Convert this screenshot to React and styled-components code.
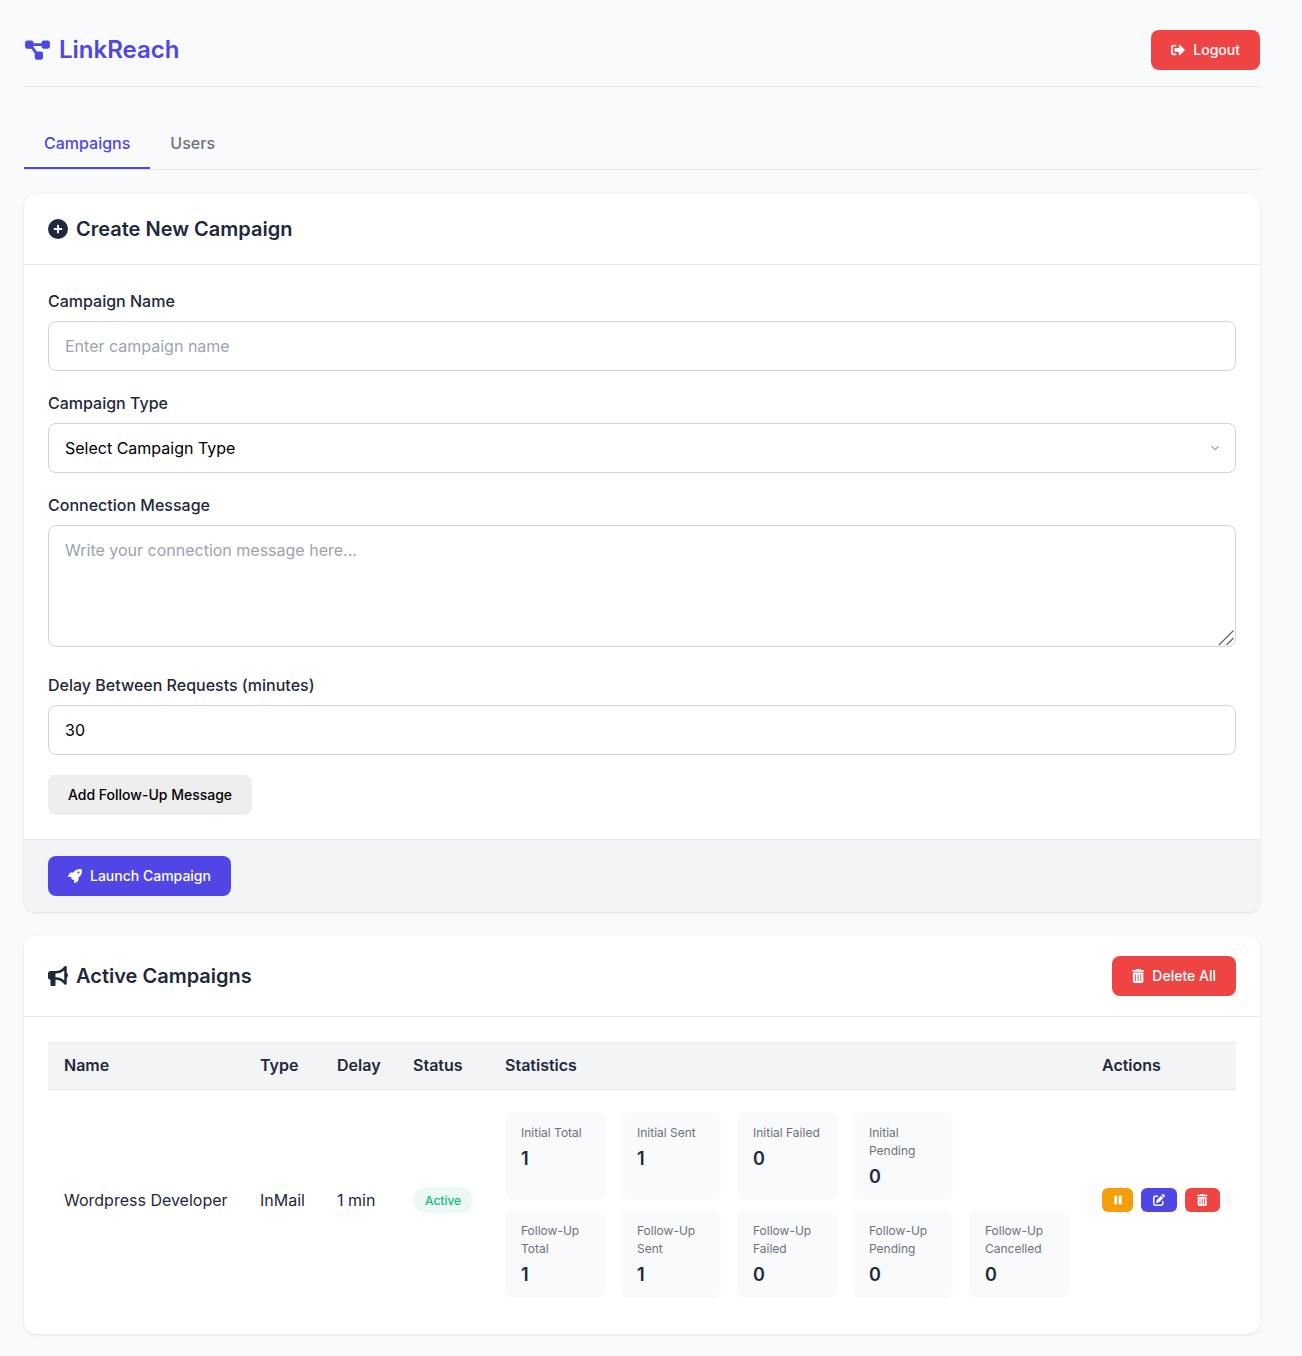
import React from "react";
import styled, { createGlobalStyle } from "styled-components";
import { FaSignOutAlt } from "react-icons/fa";
import {
  FaDiagramProject,
  FaCirclePlus,
  FaRocket,
  FaBullhorn,
  FaTrashCan,
  FaPause,
  FaPenToSquare,
} from "react-icons/fa6";

const GlobalStyle = createGlobalStyle`
  * {
    box-sizing: border-box;
  }
  html, body {
    margin: 0;
    padding: 0;
    background-color: #f9fafb;
  }
  body {
    font-family: Inter, "Liberation Sans", sans-serif;
    font-size: 16px;
    line-height: 1.5;
    color: #1e293b;
  }
`;

const Page = styled.div`
  width: 1284px;
  padding: 30px 24px 22px;
`;

const Header = styled.header`
  display: flex;
  justify-content: space-between;
  align-items: center;
  padding-bottom: 16px;
  border-bottom: 1px solid #e5e7eb;
`;

const Logo = styled.div`
  display: flex;
  align-items: center;
  gap: 8px;
  font-size: 24px;
  font-weight: 600;
  color: #4f46e5;
`;

const LogoIcon = styled(FaDiagramProject)`
  width: 27px;
  height: 22px;
`;

const Button = styled.button`
  display: inline-flex;
  align-items: center;
  gap: 8px;
  height: 40px;
  padding: 0 20px 1px;
  border: none;
  border-radius: 8px;
  font-family: inherit;
  font-size: 14px;
  font-weight: 500;
  color: ${({ $variant }) => ($variant === "plain" ? "#000" : "#fff")};
  background-color: ${({ $variant }) =>
    $variant === "danger" ? "#ef4444" : $variant === "plain" ? "#eeeeee" : "#4f46e5"};
  cursor: pointer;
`;

const TrashIcon = styled(FaTrashCan)`
  width: ${({ $h }) => ($h * 448) / 512}px;
  height: ${({ $h }) => $h}px;
`;

const PauseIcon = styled(FaPause)`
  width: 8px;
  height: 12px;
`;

const Tabs = styled.nav`
  display: flex;
  margin: 32px 0 24px;
  border-bottom: 1px solid #e5e7eb;
`;

const Tab = styled.div`
  padding: 12px 20px;
  font-weight: 500;
  color: ${({ $active }) => ($active ? "#4f46e5" : "#6b7280")};
  border-bottom: 2px solid ${({ $active }) => ($active ? "#4f46e5" : "transparent")};
`;

const Card = styled.section`
  background-color: #fff;
  border-radius: 12px;
  box-shadow: 0 1px 3px rgba(0, 0, 0, 0.1);
  margin-bottom: 24px;
  overflow: hidden;
`;

const CardHeader = styled.div`
  display: flex;
  justify-content: space-between;
  align-items: center;
  min-height: 71px;
  padding: 20px 24px;
  border-bottom: 1px solid #e5e7eb;
`;

const CardTitle = styled.h2`
  display: flex;
  align-items: center;
  gap: 8px;
  margin: 0;
  font-size: 20px;
  font-weight: 600;
  line-height: 30px;
`;

const CardBody = styled.div`
  padding: 24px;
`;

const CardFooter = styled.div`
  padding: 16px 24px;
  background-color: #f3f4f6;
  border-top: 1px solid #e5e7eb;
`;

const Field = styled.div`
  margin-bottom: 20px;
`;

const Label = styled.label`
  display: block;
  margin-bottom: 8px;
  font-weight: 500;
`;

const controlStyles = `
  display: block;
  width: 100%;
  padding: 12px 16px;
  border: 1px solid #d1d5db;
  border-radius: 8px;
  background-color: #fff;
  font-family: inherit;
  font-size: 16px;
  line-height: 24px;
  color: #000;
  outline: none;
  &::placeholder {
    color: #9ca3af;
  }
`;

const Input = styled.input`
  ${controlStyles}
  height: 50px;
`;

const Select = styled.select`
  ${controlStyles}
  height: 50px;
  appearance: none;
  background-image: url("data:image/svg+xml,%3Csvg xmlns='http://www.w3.org/2000/svg' width='10' height='6' viewBox='0 0 10 6'%3E%3Cpath d='M1.5 1.5 5 4.5l3.5-3' fill='none' stroke='%236b7280' stroke-width='1'/%3E%3C/svg%3E");
  background-repeat: no-repeat;
  background-position: right 15px center;
`;

const TextAreaWrap = styled.div`
  position: relative;
  margin-bottom: 26px;
`;

const TextArea = styled.textarea`
  ${controlStyles}
  height: 122px;
  resize: none;
`;

const ResizeGrip = styled.svg`
  position: absolute;
  right: 1px;
  bottom: 1px;
  pointer-events: none;
`;

const Table = styled.table`
  width: 100%;
  table-layout: fixed;
  border-collapse: collapse;
`;

const Th = styled.th`
  width: ${({ $w }) => $w}px;
  height: 48px;
  padding: 0 16px;
  background-color: #f3f4f6;
  border-bottom: 1px solid #e5e7eb;
  font-weight: 600;
  text-align: left;
`;

const Td = styled.td`
  padding: 12px 16px;
  vertical-align: middle;
  white-space: ${({ $wrap }) => ($wrap ? "normal" : "nowrap")};
`;

const Badge = styled.span`
  display: inline-block;
  padding: 5px 12px 3px;
  border-radius: 9999px;
  font-size: 12px;
  font-weight: 500;
  line-height: 18px;
  color: #10b981;
  background-color: #ecf8f4;
`;

const StatRows = styled.div`
  display: flex;
  flex-direction: column;
  gap: 10px;
  padding-top: 10px;
`;

const StatRow = styled.div`
  display: flex;
  gap: 16px;
`;

const StatCard = styled.div`
  width: 100px;
  padding: 12px 16px;
  border-radius: 8px;
  background-color: #f9fafb;
`;

const StatLabel = styled.div`
  margin-bottom: 5px;
  font-size: 12px;
  line-height: 18px;
  color: #6b7280;
`;

const StatValue = styled.div`
  font-size: 18px;
  font-weight: 600;
  line-height: 23px;
`;

const ActionRow = styled.div`
  display: flex;
  gap: 8px;
`;

const ActionButton = styled.button`
  display: inline-flex;
  align-items: center;
  justify-content: center;
  width: ${({ $w }) => $w}px;
  height: 24px;
  padding: 0;
  border: none;
  border-radius: 6px;
  color: #fff;
  background-color: ${({ $color }) => $color};
  cursor: pointer;
`;

const initialStats = [
  ["Initial Total", 1],
  ["Initial Sent", 1],
  ["Initial Failed", 0],
  ["Initial Pending", 0],
];

const followUpStats = [
  ["Follow-Up Total", 1],
  ["Follow-Up Sent", 1],
  ["Follow-Up Failed", 0],
  ["Follow-Up Pending", 0],
  ["Follow-Up Cancelled", 0],
];

const Stats = ({ items }) => (
  <StatRow>
    {items.map(([label, value]) => (
      <StatCard key={label}>
        <StatLabel>{label}</StatLabel>
        <StatValue>{value}</StatValue>
      </StatCard>
    ))}
  </StatRow>
);

export default function App() {
  return (
    <Page>
      <GlobalStyle />
      <Header>
        <Logo>
          <LogoIcon />
          LinkReach
        </Logo>
        <Button $variant="danger">
          <FaSignOutAlt size={14} />
          Logout
        </Button>
      </Header>

      <Tabs>
        <Tab $active>Campaigns</Tab>
        <Tab>Users</Tab>
      </Tabs>

      <Card>
        <CardHeader>
          <CardTitle>
            <FaCirclePlus size={20} />
            Create New Campaign
          </CardTitle>
        </CardHeader>
        <CardBody>
          <Field>
            <Label>Campaign Name</Label>
            <Input placeholder="Enter campaign name" />
          </Field>
          <Field>
            <Label>Campaign Type</Label>
            <Select defaultValue="">
              <option value="">Select Campaign Type</option>
              <option value="inmail">InMail</option>
            </Select>
          </Field>
          <div>
            <Label>Connection Message</Label>
            <TextAreaWrap>
              <TextArea placeholder="Write your connection message here..." />
              <ResizeGrip width="17" height="17" viewBox="0 0 17 17">
                <path d="M1 16 15.5 1.5M8.5 16l7-7" stroke="#666" strokeWidth="1.3" fill="none" />
              </ResizeGrip>
            </TextAreaWrap>
          </div>
          <Field>
            <Label>Delay Between Requests (minutes)</Label>
            <Input defaultValue="30" />
          </Field>
          <Button $variant="plain">Add Follow-Up Message</Button>
        </CardBody>
        <CardFooter>
          <Button>
            <FaRocket size={14} />
            Launch Campaign
          </Button>
        </CardFooter>
      </Card>

      <Card>
        <CardHeader>
          <CardTitle>
            <FaBullhorn size={20} />
            Active Campaigns
          </CardTitle>
          <Button $variant="danger">
            <TrashIcon $h={14} />
            Delete All
          </Button>
        </CardHeader>
        <CardBody>
          <Table>
            <thead>
              <tr>
                <Th $w={196}>Name</Th>
                <Th $w={77}>Type</Th>
                <Th $w={76}>Delay</Th>
                <Th $w={92}>Status</Th>
                <Th $w={597}>Statistics</Th>
                <Th $w={150}>Actions</Th>
              </tr>
            </thead>
            <tbody>
              <tr>
                <Td>Wordpress Developer</Td>
                <Td>InMail</Td>
                <Td>1 min</Td>
                <Td>
                  <Badge>Active</Badge>
                </Td>
                <Td $wrap>
                  <StatRows>
                    <Stats items={initialStats} />
                    <Stats items={followUpStats} />
                  </StatRows>
                </Td>
                <Td>
                  <ActionRow>
                    <ActionButton $w={31} $color="#f59e0b">
                      <PauseIcon />
                    </ActionButton>
                    <ActionButton $w={36} $color="#4f46e5">
                      <FaPenToSquare size={12} />
                    </ActionButton>
                    <ActionButton $w={35} $color="#ef4444">
                      <TrashIcon $h={12} />
                    </ActionButton>
                  </ActionRow>
                </Td>
              </tr>
            </tbody>
          </Table>
        </CardBody>
      </Card>
    </Page>
  );
}
